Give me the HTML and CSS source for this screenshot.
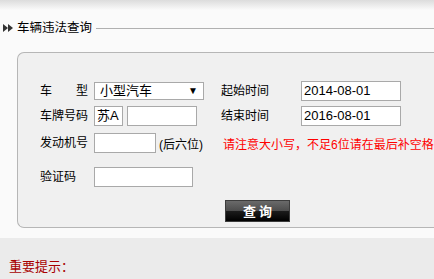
FILE: index.html
```html
<!DOCTYPE html>
<html lang="zh-CN">

<head>
    <meta charset="UTF-8">
    <title>车辆违法查询</title>
    <link rel="stylesheet" href="styles.css">
</head>

<body>
    <div class="shade"></div>
    <div class="title">
        <svg class="arrow" width="11" height="8" viewBox="0 0 11 8">
            <polygon points="0,0 5,4 0,8" fill="#333"/>
            <polygon points="5,0 10,4 5,8" fill="#333"/>
        </svg>
        <span class="title-text">车辆违法查询</span>
        <span class="title-line"></span>
    </div>

    <div class="panel">
        <div class="row">
            <span class="label">车　　型</span>
            <div class="field">
                <div class="select"><span>小型汽车</span><span class="caret">▼</span></div>
            </div>
            <span class="label2">起始时间</span>
            <div class="box date">2014-08-01</div>
        </div>
        <div class="row">
            <span class="label">车牌号码</span>
            <div class="field">
                <div class="box prefix">苏A</div>
                <div class="box plate"></div>
            </div>
            <span class="label2">结束时间</span>
            <div class="box date">2016-08-01</div>
        </div>
        <div class="row engine">
            <span class="label">发动机号</span>
            <div class="field">
                <div class="box engine-no"></div>
                <span class="hint">(后六位)</span>
            </div>
            <span class="warn">请注意大小写，不足6位请在最后补空格</span>
        </div>
        <div class="row verify">
            <span class="label">验证码</span>
            <div class="box code"></div>
        </div>
        <div class="actions">
            <button class="btn">查 询</button>
        </div>
    </div>

    <div class="notice">
        <p class="notice-title">重要提示：</p>
    </div>
</body>

</html>
```

FILE: styles.css
```css
* {
    margin: 0;
    padding: 0;
    box-sizing: border-box;
}

body {
    background: #fafafa;
    font-family: "Liberation Sans", "Noto Sans CJK SC", sans-serif;
    font-size: 12px;
    color: #000;
    overflow: hidden;
    width: 434px;
    height: 279px;
}

.shade {
    height: 10px;
    background: linear-gradient(#dcdcdc, #fafafa);
}

.title {
    display: flex;
    align-items: center;
    height: 16px;
    margin-top: 10px;
}

.arrow {
    margin-left: 3px;
    margin-right: 3px;
}

.title-text {
    font-size: 12.5px;
    line-height: 16px;
}

.title-line {
    flex: 1;
    height: 1px;
    margin-left: 4px;
    background: #b0b0b0;
}

.panel {
    margin: 16px 0 0 17px;
    background: #f0f0f0;
    border: 1px solid #b6b6b6;
    border-right: none;
    border-radius: 7px 0 0 7px;
    padding: 28px 0 5px 22px;
}

.row {
    display: flex;
    align-items: center;
    height: 20px;
    white-space: nowrap;
    overflow: hidden;
}

.row + .row {
    margin-top: 5px;
}

.row.engine {
    margin-top: 7px;
}

.row.verify {
    margin-top: 14px;
}

.label {
    flex: none;
    width: 54px;
    line-height: 20px;
}

.field {
    flex: none;
    width: 127px;
    display: flex;
    align-items: center;
}

.label2 {
    flex: none;
    width: 80px;
    line-height: 20px;
}

.box {
    flex: none;
    height: 20px;
    background: #fff;
    border: 1px solid #a9a9a9;
    font-size: 13px;
    line-height: 18px;
    padding-left: 2px;
}

.select {
    width: 110px;
    height: 18px;
    background: #fff;
    border: 1px solid #a9a9a9;
    font-size: 13px;
    line-height: 16px;
    padding: 0 5px 0 5px;
    display: flex;
    justify-content: space-between;
}

.caret {
    font-size: 10px;
}

.date {
    width: 100px;
}

.prefix {
    width: 29px;
}

.plate {
    width: 70px;
    margin-left: 4px;
}

.engine-no {
    width: 62px;
}

.hint {
    margin-left: 3px;
}

.warn {
    margin-left: 2px;
    color: #f00;
}

.code {
    width: 99px;
}

.actions {
    margin-top: 13px;
    padding-left: 185px;
}

.btn {
    width: 65px;
    height: 22px;
    border: 1px solid #3c3c3c;
    background: linear-gradient(#6a6a6a, #4c4c4c 50%, #1c1c1c 50%, #000);
    color: #fff;
    font-family: "Noto Sans CJK SC", sans-serif;
    font-size: 13px;
    font-weight: bold;
    line-height: 20px;
    cursor: pointer;
}

.notice {
    margin-top: 10px;
    height: 41px;
    background: #ebebeb;
    padding: 21px 0 0 9px;
}

.notice-title {
    color: #a80000;
    font-size: 13px;
    line-height: 16px;
}
```
